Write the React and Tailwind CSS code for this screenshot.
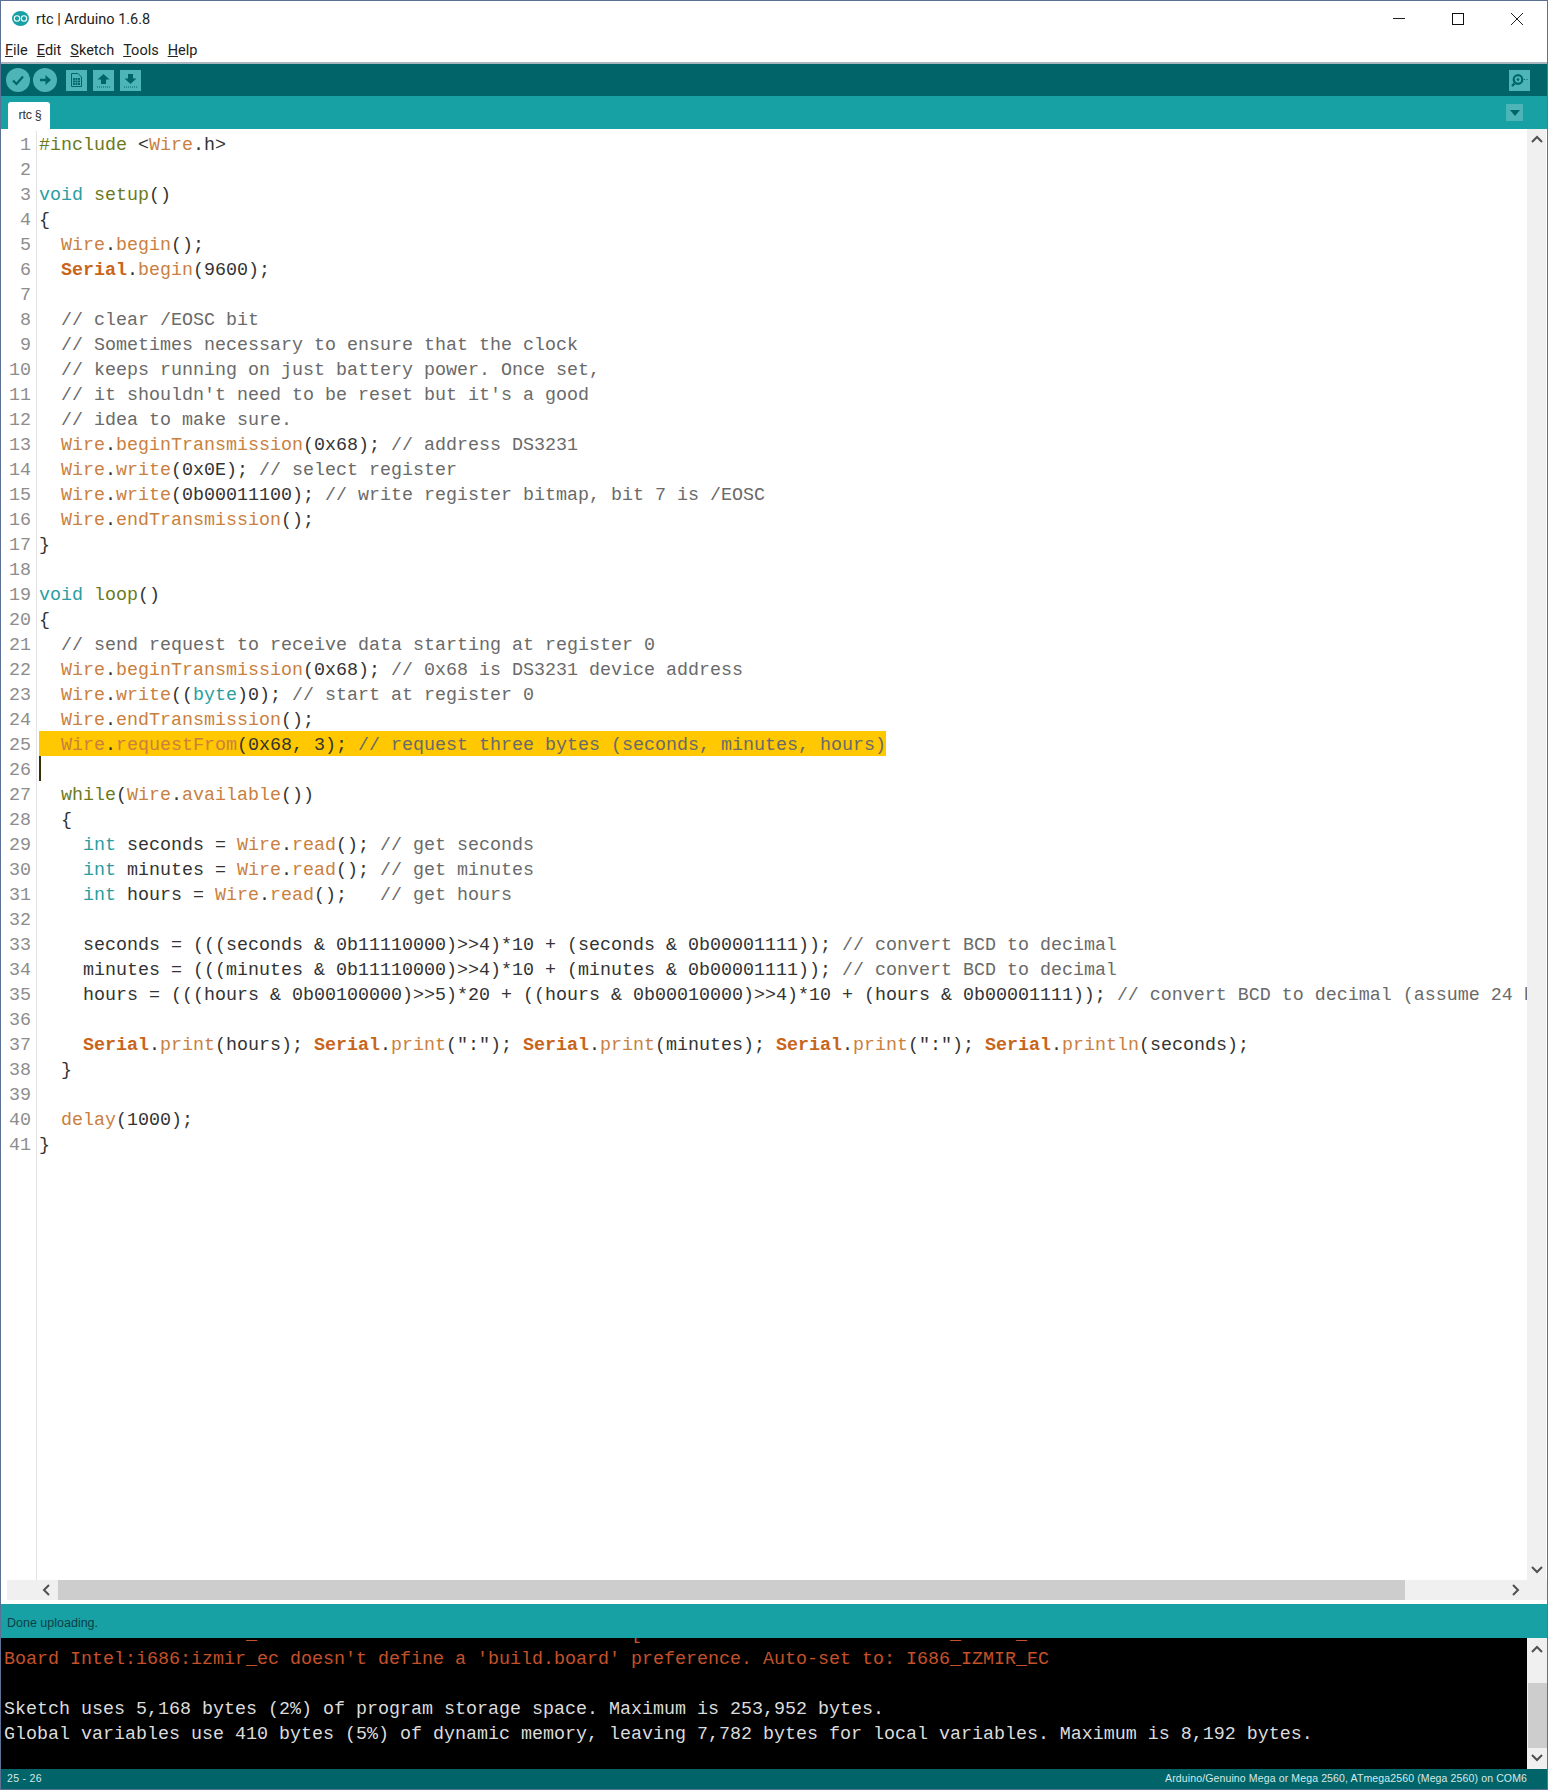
import React from 'react';

const OL = 'text-[#6b7a1e]';
const TE = 'text-[#2a9da1]';
const OR = 'text-[#c9803f]';
const BO = 'text-[#c8651b] font-bold';
const CM = 'text-[#6a6a6a]';
const TX = 'text-[#333333]';

const wire = (m) => [['Wire', OR], ['.', TX], [m, OR]];
const ser = (m) => [['Serial', BO], ['.', TX], [m, OR]];

const codeLines = [
  [['#include', OL], [' <', TX], ['Wire', OR], ['.h>', TX]],
  [],
  [['void', TE], [' ', TX], ['setup', OL], ['()', TX]],
  [['{', TX]],
  [['  ', TX], ...wire('begin'), ['();', TX]],
  [['  ', TX], ...ser('begin'), ['(9600);', TX]],
  [],
  [['  // clear /EOSC bit', CM]],
  [['  // Sometimes necessary to ensure that the clock', CM]],
  [['  // keeps running on just battery power. Once set,', CM]],
  [["  // it shouldn't need to be reset but it's a good", CM]],
  [['  // idea to make sure.', CM]],
  [['  ', TX], ...wire('beginTransmission'), ['(0x68); ', TX], ['// address DS3231', CM]],
  [['  ', TX], ...wire('write'), ['(0x0E); ', TX], ['// select register', CM]],
  [['  ', TX], ...wire('write'), ['(0b00011100); ', TX], ['// write register bitmap, bit 7 is /EOSC', CM]],
  [['  ', TX], ...wire('endTransmission'), ['();', TX]],
  [['}', TX]],
  [],
  [['void', TE], [' ', TX], ['loop', OL], ['()', TX]],
  [['{', TX]],
  [['  // send request to receive data starting at register 0', CM]],
  [['  ', TX], ...wire('beginTransmission'), ['(0x68); ', TX], ['// 0x68 is DS3231 device address', CM]],
  [['  ', TX], ...wire('write'), ['((', TX], ['byte', TE], [')0); ', TX], ['// start at register 0', CM]],
  [['  ', TX], ...wire('endTransmission'), ['();', TX]],
  [['  ', TX], ...wire('requestFrom'), ['(0x68, 3); ', TX], ['// request three bytes (seconds, minutes, hours)', CM]],
  [],
  [['  ', TX], ['while', OL], ['(', TX], ['Wire', OR], ['.', TX], ['available', OR], ['())', TX]],
  [['  {', TX]],
  [['    ', TX], ['int', TE], [' seconds = ', TX], ...wire('read'), ['(); ', TX], ['// get seconds', CM]],
  [['    ', TX], ['int', TE], [' minutes = ', TX], ...wire('read'), ['(); ', TX], ['// get minutes', CM]],
  [['    ', TX], ['int', TE], [' hours = ', TX], ...wire('read'), ['();   ', TX], ['// get hours', CM]],
  [],
  [['    seconds = (((seconds & 0b11110000)>>4)*10 + (seconds & 0b00001111)); ', TX], ['// convert BCD to decimal', CM]],
  [['    minutes = (((minutes & 0b11110000)>>4)*10 + (minutes & 0b00001111)); ', TX], ['// convert BCD to decimal', CM]],
  [['    hours = (((hours & 0b00100000)>>5)*20 + ((hours & 0b00010000)>>4)*10 + (hours & 0b00001111)); ', TX], ['// convert BCD to decimal (assume 24 hour clock)', CM]],
  [],
  [['    ', TX], ...ser('print'), ['(hours); ', TX], ...ser('print'), ['(":"); ', TX], ...ser('print'), ['(minutes); ', TX], ...ser('print'), ['(":"); ', TX], ...ser('println'), ['(seconds);', TX]],
  [['  }', TX]],
  [],
  [['  ', TX], ['delay', OR], ['(1000);', TX]],
  [['}', TX]],
];

function ScrollUp() {
  return (
    <svg width="12" height="8" viewBox="0 0 12 8" fill="none" stroke="#505050" strokeWidth="2">
      <path d="M1 7l5-5 5 5" />
    </svg>
  );
}

function ScrollDown() {
  return (
    <svg width="12" height="8" viewBox="0 0 12 8" fill="none" stroke="#505050" strokeWidth="2">
      <path d="M1 1l5 5 5-5" />
    </svg>
  );
}

function ToolSquare({ children }) {
  return <div className="w-[21px] h-[21px] bg-[#4db5b8] flex items-center justify-center">{children}</div>;
}

function ToolCircle({ children }) {
  return <div className="w-[24px] h-[24px] rounded-full bg-[#4db5b8] flex items-center justify-center">{children}</div>;
}

export default function App() {
  return (
    <div className="w-[1548px] h-[1790px] flex flex-col overflow-hidden bg-white border border-[#5d7196] font-['Liberation_Sans',sans-serif]">
      {/* title bar */}
      <div className="h-[31px] pt-[4px] flex items-center shrink-0">
        <svg className="ml-[11px]" width="17" height="15" viewBox="0 0 17 15">
          <ellipse cx="8.5" cy="7.5" rx="8.5" ry="7.5" fill="#17a1a5" />
          <circle cx="5" cy="7.5" r="2.7" fill="none" stroke="#fff" strokeWidth="1.1" />
          <circle cx="12" cy="7.5" r="2.7" fill="none" stroke="#fff" strokeWidth="1.1" />
        </svg>
        <span className="ml-[7px] pt-[2px] text-[14.5px] text-[#222222] font-['Roboto',sans-serif]">rtc | Arduino 1.6.8</span>
        <div className="ml-auto flex items-center">
          <svg width="14" height="14" viewBox="0 0 14 14" className="mr-[45px]"><path d="M1 6.5h12" stroke="#222" strokeWidth="1" /></svg>
          <svg width="14" height="14" viewBox="0 0 14 14" className="mr-[45px]"><rect x="1.5" y="1.5" width="11" height="11" fill="none" stroke="#111" strokeWidth="1" /></svg>
          <svg width="14" height="14" viewBox="0 0 14 14" className="mr-[23px]"><path d="M1 1l12 12M13 1L1 13" stroke="#222" strokeWidth="1" /></svg>
        </div>
      </div>

      {/* menu bar */}
      <div className="h-[30px] pt-[8px] pl-[4px] flex items-center gap-[9px] shrink-0 text-[14.5px] text-[#222222] font-['Roboto',sans-serif]">
        <span><u>F</u>ile</span>
        <span><u>E</u>dit</span>
        <span><u>S</u>ketch</span>
        <span><u>T</u>ools</span>
        <span><u>H</u>elp</span>
      </div>
      <div className="h-[2px] bg-[#a9b5bf] shrink-0" />

      {/* toolbar */}
      <div className="h-[32px] bg-[#006468] flex items-center shrink-0">
        <div className="ml-[5px] flex gap-[3px]">
          <ToolCircle>
            <svg width="14" height="12" viewBox="0 0 14 12" fill="none" stroke="#006468" strokeWidth="2.2"><path d="M2 6.5l3.5 3.5L12 2.5" /></svg>
          </ToolCircle>
          <ToolCircle>
            <svg width="11" height="10" viewBox="0 0 11 10" fill="#006468"><path d="M0 3.8h5.5V0L11 5l-5.5 5V6.2H0z" /></svg>
          </ToolCircle>
        </div>
        <div className="ml-[9px] flex gap-[6px]">
          <ToolSquare>
            <svg width="11" height="14" viewBox="0 0 11 14">
              <path d="M0.5 0.5h6.5l3.5 3.5v9.5H0.5z" fill="#4db5b8" stroke="#006468" />
              <path d="M2 5h7v7H2z" fill="#006468" />
              <path d="M2 7.3h7M2 9.6h7M4.3 5v7M6.6 5v7" stroke="#4db5b8" strokeWidth="0.6" />
            </svg>
          </ToolSquare>
          <ToolSquare>
            <svg width="13" height="15" viewBox="0 0 13 15" fill="#006468">
              <path d="M6.5 1l6 5.5H9V11H4V6.5H0.5z" />
              <path d="M0 14h13" stroke="#006468" strokeDasharray="1 1" />
            </svg>
          </ToolSquare>
          <ToolSquare>
            <svg width="13" height="15" viewBox="0 0 13 15" fill="#006468">
              <path d="M6.5 11L0.5 5.5H4V1h5v4.5h3.5z" />
              <path d="M0 14h13" stroke="#006468" strokeDasharray="1 1" />
            </svg>
          </ToolSquare>
        </div>
        <div className="ml-auto mr-[17px]">
          <ToolSquare>
            <svg width="17" height="15" viewBox="0 0 17 15" fill="none" stroke="#006468">
              <circle cx="7" cy="6.5" r="4.3" strokeWidth="2.2" />
              <circle cx="7" cy="6.5" r="0.9" fill="#006468" />
              <path d="M3.5 10.5L1 13" strokeWidth="2.4" />
              <path d="M13 6.5h1M15.5 6.5h1" strokeWidth="1" />
            </svg>
          </ToolSquare>
        </div>
      </div>

      {/* tab strip */}
      <div className="h-[33px] bg-[#17a1a5] flex items-end shrink-0">
        <div className="ml-[7px] w-[42px] h-[27px] pb-[1px] pl-[2px] bg-white rounded-t-[3px] flex items-center justify-center text-[12.5px] tracking-[-0.3px] text-[#333333]">rtc §</div>
        <div className="ml-auto mr-[24px] mb-[8px] w-[17px] h-[17px] bg-[#4db5b8] flex items-center justify-center">
          <svg width="10" height="6" viewBox="0 0 10 6" fill="#006468"><path d="M0 0h10L5 6z" /></svg>
        </div>
      </div>

      {/* editor */}
      <div className="flex-1 flex min-h-0">
        <div className="flex-1 min-w-0 flex flex-col pt-[2px] overflow-hidden text-[18.33px] font-['Liberation_Mono',monospace]">
          {codeLines.map((tokens, i) => (
            <div key={i} className="flex h-[25px] shrink-0 leading-[30px]">
              <div className="w-[36px] pr-[5px] shrink-0 text-right text-[#8d8d8d] border-r border-[#e2e2e2] mr-[2px]">{i + 1}</div>
              {i === 25 && <div className="w-[2px] h-full bg-[#33300a]" />}
              <div className={`whitespace-pre ${i === 24 ? 'bg-[#ffc800] h-[25px]' : ''}`}>
                {tokens.map(([text, cls], j) => (
                  <span key={j} className={cls}>{text}</span>
                ))}
              </div>
            </div>
          ))}
          <div className="flex-1 w-[36px] border-r border-[#e2e2e2]" />
        </div>
        <div className="w-[19px] mr-[1px] shrink-0 bg-[#f0f0f0] flex flex-col justify-between items-center py-[6px]">
          <ScrollUp />
          <ScrollDown />
        </div>
      </div>

      {/* horizontal scrollbar */}
      <div className="h-[20px] pl-[6px] flex shrink-0">
        <div className="w-[51px] bg-[#f0f0f0] flex items-center justify-end pr-[8px]">
          <svg width="8" height="12" viewBox="0 0 8 12" fill="none" stroke="#505050" strokeWidth="2"><path d="M7 1L2 6l5 5" /></svg>
        </div>
        <div className="w-[1347px] bg-[#cdcdcd]" />
        <div className="flex-1 bg-[#f0f0f0] flex items-center justify-end pr-[27px]">
          <svg width="8" height="12" viewBox="0 0 8 12" fill="none" stroke="#505050" strokeWidth="2"><path d="M1 1l5 5-5 5" /></svg>
        </div>
      </div>
      <div className="h-[4px] shrink-0" />

      {/* status band */}
      <div className="h-[34px] pt-[5px] bg-[#17a1a5] flex items-center shrink-0 pl-[6px] text-[12.5px] text-[#0d3f44]">Done uploading.</div>

      {/* console */}
      <div className="h-[131px] bg-black flex shrink-0">
        <div className="flex-1 min-w-0 overflow-hidden pl-[3px] text-[18.33px] leading-[25px] whitespace-pre font-['Liberation_Mono',monospace] text-[#dcdcdc]">
          <div className="-mt-[16px] h-[25px] text-[#c4512a]">{'                      _                                  [                            _     _'}</div>
          <div className="h-[25px] text-[#c4512a]">Board Intel:i686:izmir_ec doesn't define a 'build.board' preference. Auto-set to: I686_IZMIR_EC</div>
          <div className="h-[25px]" />
          <div className="h-[25px]">Sketch uses 5,168 bytes (2%) of program storage space. Maximum is 253,952 bytes.</div>
          <div className="h-[25px]">Global variables use 410 bytes (5%) of dynamic memory, leaving 7,782 bytes for local variables. Maximum is 8,192 bytes.</div>
        </div>
        <div className="w-[20px] shrink-0 bg-[#f0f0f0] flex flex-col items-center pt-[7px] pb-[7px]">
          <ScrollUp />
          <div className="w-[19px] h-[65px] bg-[#cdcdcd] mt-[30px] mb-auto" />
          <ScrollDown />
        </div>
      </div>

      {/* bottom status */}
      <div className="h-[20px] shrink-0 bg-[#006468] flex items-center justify-between pl-[6px] pr-[20px] text-[10.5px] text-[#d8e8e8]">
        <span className="tracking-[0.3px]">25 - 26</span>
        <span className="tracking-[0.13px]">Arduino/Genuino Mega or Mega 2560, ATmega2560 (Mega 2560) on COM6</span>
      </div>
    </div>
  );
}
